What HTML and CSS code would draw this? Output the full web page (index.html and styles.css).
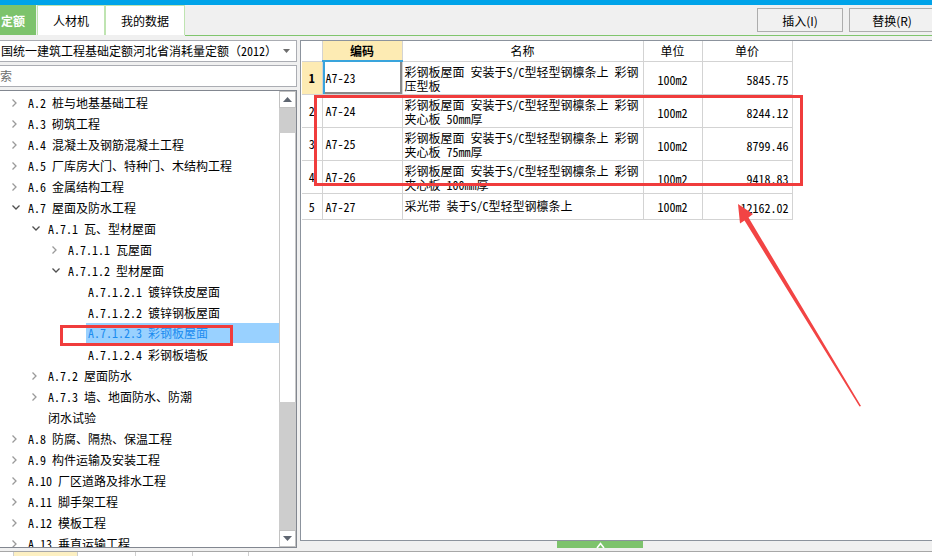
FILE: index.html
```html
<!DOCTYPE html>
<html lang="zh-CN">
<head>
<meta charset="utf-8">
<title>定额</title>
<link rel="stylesheet" href="styles.css">
</head>
<body>
<div class="topbar"></div>
<div class="toolbar">
  <div class="tabs">
    <div class="tab tab-active">定额</div>
    <div class="tab tab-rcj">人材机</div>
    <div class="tab tab-mine">我的数据</div>
  </div>
  <div class="toolbar-fill">
    <div class="btn">插入(I)</div>
    <div class="btn">替换(R)</div>
  </div>
</div>
<div class="main">
  <div class="left">
    <div class="combo">
      <span class="combo-text">国统一建筑工程基础定额河北省消耗量定额（2012）</span>
      <svg class="combo-arrow" width="7" height="4" viewBox="0 0 7 4"><path d="M0 0h7L3.5 4z" fill="#6d6d6d"/></svg>
    </div>
    <div class="search"><span class="placeholder">索</span></div>
    <div class="tree">
      <div class="tree-list">
        <div class="node l1"><span class="chev"><svg width="5" height="8" viewBox="0 0 5 8"><path d="M0.5 0.5L4 4L0.5 7.5" fill="none" stroke="#9a9a9a" stroke-width="1.3"/></svg></span><span class="label">A.2 桩与地基基础工程</span></div>
        <div class="node l1"><span class="chev"><svg width="5" height="8" viewBox="0 0 5 8"><path d="M0.5 0.5L4 4L0.5 7.5" fill="none" stroke="#9a9a9a" stroke-width="1.3"/></svg></span><span class="label">A.3 砌筑工程</span></div>
        <div class="node l1"><span class="chev"><svg width="5" height="8" viewBox="0 0 5 8"><path d="M0.5 0.5L4 4L0.5 7.5" fill="none" stroke="#9a9a9a" stroke-width="1.3"/></svg></span><span class="label">A.4 混凝土及钢筋混凝土工程</span></div>
        <div class="node l1"><span class="chev"><svg width="5" height="8" viewBox="0 0 5 8"><path d="M0.5 0.5L4 4L0.5 7.5" fill="none" stroke="#9a9a9a" stroke-width="1.3"/></svg></span><span class="label">A.5 厂库房大门、特种门、木结构工程</span></div>
        <div class="node l1"><span class="chev"><svg width="5" height="8" viewBox="0 0 5 8"><path d="M0.5 0.5L4 4L0.5 7.5" fill="none" stroke="#9a9a9a" stroke-width="1.3"/></svg></span><span class="label">A.6 金属结构工程</span></div>
        <div class="node l1"><span class="chev"><svg width="8" height="5" viewBox="0 0 8 5"><path d="M0.5 0.5L4 4L7.5 0.5" fill="none" stroke="#505050" stroke-width="1.3"/></svg></span><span class="label">A.7 屋面及防水工程</span></div>
        <div class="node l2"><span class="chev"><svg width="8" height="5" viewBox="0 0 8 5"><path d="M0.5 0.5L4 4L7.5 0.5" fill="none" stroke="#505050" stroke-width="1.3"/></svg></span><span class="label">A.7.1 瓦、型材屋面</span></div>
        <div class="node l3"><span class="chev"><svg width="5" height="8" viewBox="0 0 5 8"><path d="M0.5 0.5L4 4L0.5 7.5" fill="none" stroke="#9a9a9a" stroke-width="1.3"/></svg></span><span class="label">A.7.1.1 瓦屋面</span></div>
        <div class="node l3"><span class="chev"><svg width="8" height="5" viewBox="0 0 8 5"><path d="M0.5 0.5L4 4L7.5 0.5" fill="none" stroke="#505050" stroke-width="1.3"/></svg></span><span class="label">A.7.1.2 型材屋面</span></div>
        <div class="node l4"><span class="chev"></span><span class="label">A.7.1.2.1 镀锌铁皮屋面</span></div>
        <div class="node l4"><span class="chev"></span><span class="label">A.7.1.2.2 镀锌钢板屋面</span></div>
        <div class="node l4"><span class="chev"></span><span class="label selected">A.7.1.2.3 彩钢板屋面</span></div>
        <div class="node l4"><span class="chev"></span><span class="label">A.7.1.2.4 彩钢板墙板</span></div>
        <div class="node l2"><span class="chev"><svg width="5" height="8" viewBox="0 0 5 8"><path d="M0.5 0.5L4 4L0.5 7.5" fill="none" stroke="#9a9a9a" stroke-width="1.3"/></svg></span><span class="label">A.7.2 屋面防水</span></div>
        <div class="node l2"><span class="chev"><svg width="5" height="8" viewBox="0 0 5 8"><path d="M0.5 0.5L4 4L0.5 7.5" fill="none" stroke="#9a9a9a" stroke-width="1.3"/></svg></span><span class="label">A.7.3 墙、地面防水、防潮<br>闭水试验</span></div>
        <div class="node l1"><span class="chev"><svg width="5" height="8" viewBox="0 0 5 8"><path d="M0.5 0.5L4 4L0.5 7.5" fill="none" stroke="#9a9a9a" stroke-width="1.3"/></svg></span><span class="label">A.8 防腐、隔热、保温工程</span></div>
        <div class="node l1"><span class="chev"><svg width="5" height="8" viewBox="0 0 5 8"><path d="M0.5 0.5L4 4L0.5 7.5" fill="none" stroke="#9a9a9a" stroke-width="1.3"/></svg></span><span class="label">A.9 构件运输及安装工程</span></div>
        <div class="node l1"><span class="chev"><svg width="5" height="8" viewBox="0 0 5 8"><path d="M0.5 0.5L4 4L0.5 7.5" fill="none" stroke="#9a9a9a" stroke-width="1.3"/></svg></span><span class="label">A.10 厂区道路及排水工程</span></div>
        <div class="node l1"><span class="chev"><svg width="5" height="8" viewBox="0 0 5 8"><path d="M0.5 0.5L4 4L0.5 7.5" fill="none" stroke="#9a9a9a" stroke-width="1.3"/></svg></span><span class="label">A.11 脚手架工程</span></div>
        <div class="node l1"><span class="chev"><svg width="5" height="8" viewBox="0 0 5 8"><path d="M0.5 0.5L4 4L0.5 7.5" fill="none" stroke="#9a9a9a" stroke-width="1.3"/></svg></span><span class="label">A.12 模板工程</span></div>
        <div class="node l1"><span class="chev"><svg width="5" height="8" viewBox="0 0 5 8"><path d="M0.5 0.5L4 4L0.5 7.5" fill="none" stroke="#9a9a9a" stroke-width="1.3"/></svg></span><span class="label">A.13 垂直运输工程</span></div>
      </div>
      <div class="scrollbar">
        <div class="sb-btn"><svg width="9" height="5" viewBox="0 0 9 5"><path d="M0 5h9L4.5 0z" fill="#5f6671"/></svg></div>
        <div class="sb-track sb-pre"></div>
        <div class="sb-thumb"></div>
        <div class="sb-track sb-post"></div>
        <div class="sb-btn"><svg width="9" height="5" viewBox="0 0 9 5"><path d="M0 0h9L4.5 5z" fill="#5f6671"/></svg></div>
      </div>
    </div>
  </div>
  <div class="right">
    <div class="panel">
      <table class="grid">
        <colgroup><col class="c-no"><col class="c-code"><col class="c-name"><col class="c-unit"><col class="c-price"></colgroup>
        <thead>
          <tr><th class="corner"></th><th class="hl code-h">编码</th><th>名称</th><th>单位</th><th>单价</th></tr>
        </thead>
        <tbody>
          <tr class="r2">
            <td class="no hl">1</td><td class="code sel">A7-23</td>
            <td class="name">彩钢板屋面 安装于S/C型轻型钢檩条上 彩钢<br>压型板</td>
            <td class="unit">100m2</td><td class="price">5845.75</td>
          </tr>
          <tr class="r2">
            <td class="no">2</td><td class="code">A7-24</td>
            <td class="name">彩钢板屋面 安装于S/C型轻型钢檩条上 彩钢<br>夹心板 50mm厚</td>
            <td class="unit">100m2</td><td class="price">8244.12</td>
          </tr>
          <tr class="r2">
            <td class="no">3</td><td class="code">A7-25</td>
            <td class="name">彩钢板屋面 安装于S/C型轻型钢檩条上 彩钢<br>夹心板 75mm厚</td>
            <td class="unit">100m2</td><td class="price">8799.46</td>
          </tr>
          <tr class="r2">
            <td class="no">4</td><td class="code">A7-26</td>
            <td class="name">彩钢板屋面 安装于S/C型轻型钢檩条上 彩钢<br>夹心板 100mm厚</td>
            <td class="unit">100m2</td><td class="price">9418.83</td>
          </tr>
          <tr class="r1">
            <td class="no">5</td><td class="code">A7-27</td>
            <td class="name single">采光带 装于S/C型轻型钢檩条上</td>
            <td class="unit">100m2</td><td class="price">12162.02</td>
          </tr>
        </tbody>
      </table>
    </div>
    <div class="handle-row">
      <div class="handle"><svg width="9" height="6" viewBox="0 0 9 6"><path d="M1 6L4.5 1.5L8 6" fill="none" stroke="#ffffff" stroke-width="1.6"/></svg></div>
    </div>
  </div>
</div>
<div class="footer">
  <div class="footer-tabs">
    <div class="ftab ftab-active"></div>
    <div class="ftab ftab-a"></div>
    <div class="ftab ftab-b"></div>
    <div class="ftab ftab-c"></div>
  </div>
</div>
<div class="annot">
  <div class="mark mark-tree"></div>
  <div class="mark mark-grid"></div>
  <svg class="arrow" width="932" height="556" viewBox="0 0 932 556">
    <polygon points="738,204 753,214 748.5,217.5 861,406 859.5,406.5 744.5,220.5 740,223.5" fill="#f24444"/>
  </svg>
</div>
</body>
</html>
```

FILE: styles.css
```css
* { box-sizing: border-box; }
html, body { margin: 0; padding: 0; }
body {
  width: 932px;
  height: 556px;
  overflow: hidden;
  position: relative;
  background: #f0f0f0;
  font-family: "Noto Sans Mono CJK SC", "Noto Sans CJK SC", monospace;
  font-size: 12px;
  color: #000;
}

/* top */
.topbar { height: 5px; background: #00a3e9; }
.toolbar { height: 31px; display: flex; }
.tabs { display: flex; height: 30px; }
.tab {
  height: 30px;
  display: flex;
  align-items: center;
  justify-content: center;
  background: #fff;
  border: 1px solid #bfe4b1;
  border-bottom: none;
  font-family: "Noto Sans CJK SC", sans-serif;
  font-size: 12px;
}
.tab-active {
  width: 36px;
  background: #7dc36c;
  border-color: #7dc36c;
  color: #fff;
  font-weight: bold;
  justify-content: flex-start;
  margin-right: 1px;
}
.tab-rcj { width: 68px; }
.tab-mine { width: 80px; }
.toolbar-fill {
  flex: 1;
  border-bottom: 1px solid #80c56d;
  display: flex;
  justify-content: flex-end;
  align-items: flex-start;
  padding-top: 3px;
  gap: 6px;
  margin-right: -3px;
}
.btn {
  width: 86px;
  height: 24px;
  border: 1px solid #adadad;
  background: #f1f1f1;
  display: flex;
  align-items: center;
  justify-content: center;
  font-family: "Noto Sans CJK SC", sans-serif;
  font-size: 12px;
}

/* main */
.main { display: flex; height: 512px; padding-top: 4px; }
.left { width: 297px; display: flex; flex-direction: column; gap: 3px; }
.combo {
  height: 22px;
  background: #fff;
  border: 1px solid #abadb3;
  border-left: none;
  display: flex;
  align-items: center;
  padding-right: 6px;
  white-space: nowrap;
}
.combo-text { flex: 1; padding-left: 1px; overflow: hidden; line-height: 20px; }
.combo-arrow { flex: none; }
.search {
  height: 22px;
  background: #fff;
  border: 1px solid #abadb3;
  border-left: none;
  display: flex;
  align-items: center;
}
.placeholder { color: #6d6d6d; line-height: 20px; }

.tree {
  flex: 1;
  background: #fff;
  border: 1px solid #828790;
  border-left: none;
  display: flex;
  overflow: hidden;
}
.tree-list { flex: 1; padding-top: 1px; overflow: hidden; white-space: nowrap; }
.node { display: flex; align-items: flex-start; line-height: 21px; }
.node.l1 { padding-left: 8px; }
.node.l2 { padding-left: 28px; }
.node.l3 { padding-left: 48px; }
.node.l4 { padding-left: 68px; }
.chev {
  width: 20px;
  height: 21px;
  flex: none;
  display: flex;
  align-items: center;
  padding-left: 4px;
}
.chev svg { display: block; }
.label { flex: 1; padding-left: 2px; margin-left: -2px; height: 21px; }
.node .label br + * { display: none; }
.label.selected {
  background: #99d1ff;
  color: #1b8cf0;
  height: 20px;
  line-height: 20px;
}
.node:has(br) .label { height: 42px; }

.scrollbar { width: 17px; flex: none; display: flex; flex-direction: column; background: #cdcdcd; }
.sb-btn {
  height: 17px;
  background: #fff;
  border: 1px solid #c2c2c2;
  display: flex;
  align-items: center;
  justify-content: center;
}
.sb-pre { height: 25px; }
.sb-thumb { height: 269px; background: #fff; border-left: 1px solid #c8c8c8; border-right: 1px solid #c8c8c8; }
.sb-post { flex: 1; }

/* right */
.right { flex: 1; margin-left: 3px; display: flex; flex-direction: column; }
.panel {
  height: 501px;
  background: #fff;
  border: 1px solid #8c939d;
  border-right: none;
  padding-left: 1px;
}
.grid {
  border-collapse: collapse;
  table-layout: fixed;
  width: 490px;
}
.c-no { width: 20px; }
.c-code { width: 80px; }
.c-name { width: 241px; }
.c-unit { width: 59px; }
.c-price { width: 90px; }
.grid th, .grid td {
  border: 1px solid #d3d3d3;
  padding: 0;
  white-space: nowrap;
  overflow: hidden;
}
.grid thead tr { height: 20px; }
.grid th {
  font-weight: normal;
  text-align: center;
  line-height: 18px;
  border-top: none;
  font-family: "Noto Sans CJK SC", sans-serif;
}
.grid th.corner { border-left: none; }
.grid th.code-h { font-weight: bold; border-bottom: 2px solid #39a4dc; }
.hl { background: #fdebb3; }
.grid td.no { text-align: center; border-left: none; }
.grid td.no.hl { font-weight: bold; }
.r2 { height: 33px; }
.r1 { height: 26px; }
.grid td.code { padding-left: 3px; vertical-align: middle; }
.grid td.code.sel { box-shadow: inset 2px 0 0 #39a4dc, inset -2px -2px 0 #8a8a8a; }
.grid td.name { vertical-align: top; padding: 3px 0 0 2px; line-height: 14px; }
.grid td.name.single { vertical-align: middle; padding-top: 0; }
.grid td.unit { text-align: center; vertical-align: middle; padding-top: 3px; }
.r1 td.unit, .r1 td.price { padding-top: 0; }
.grid td.price { text-align: right; padding-right: 3px; vertical-align: middle; padding-top: 3px; }

.handle-row { flex: 1; display: flex; padding-left: 257px; }
.handle {
  width: 86px;
  height: 7px;
  background: #7dc36c;
  display: flex;
  justify-content: center;
  align-items: flex-end;
}
.handle svg { display: block; margin-bottom: 0; }

/* footer */
.footer { height: 8px; padding-top: 3px; }
.footer-tabs { height: 5px; border-top: 1px solid #a7a7a7; background: #fff; display: flex; }
.ftab { height: 4px; border-right: 1px solid #cfcfcf; }
.ftab-active { width: 65px; margin-left: 13px; background: #fdf0c2; border-left: 1px solid #cfcfcf; }
.ftab-a { width: 58px; }
.ftab-b { width: 57px; }
.ftab-c { width: 56px; }

/* annotations drawn over the screenshot */
.annot { position: absolute; left: 0; top: 0; width: 932px; height: 556px; pointer-events: none; }
.mark { position: absolute; border: 3px solid #f03c3c; }
.mark-tree { left: 60px; top: 325px; width: 173px; height: 21px; }
.mark-grid { left: 314px; top: 95px; width: 489px; height: 91px; }
.arrow { position: absolute; left: 0; top: 0; }
```
